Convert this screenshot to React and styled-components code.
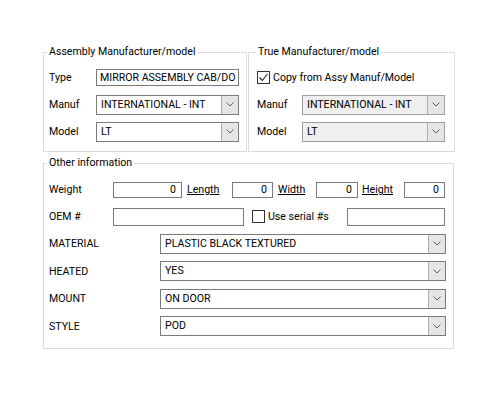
import React from "react";
import styled, { createGlobalStyle } from "styled-components";

const Global = createGlobalStyle`
  html, body { margin: 0; padding: 0; background: #fff; }
  body {
    font-family: Roboto, "Noto Sans", sans-serif;
    font-size: 10.6px;
    color: #000;
  }
  * { box-sizing: border-box; }
`;

const Page = styled.div`
  width: 500px;
  height: 400px;
  padding: 45px 0 0 43px;
  display: flex;
  flex-direction: column;
  gap: 4px;
`;

const TopRow = styled.div`
  display: flex;
  gap: 1px;
`;

const Group = styled.fieldset`
  margin: 0;
  width: ${(p) => p.$w}px;
  min-width: 0;
  border: 1px solid #dcdcdc;
  padding: ${(p) => p.$pad};
`;

const Legend = styled.legend`
  margin-left: ${(p) => p.$ml ?? -2}px;
  padding: 0 2px;
  line-height: 14px;
`;

const Row = styled.div`
  display: flex;
  align-items: center;
  height: ${(p) => p.$h ?? 27}px;
`;

const Label = styled.span`
  width: ${(p) => p.$w}px;
  flex: none;
  white-space: nowrap;
  padding-left: ${(p) => p.$pl ?? 0}px;
`;

const TextBox = styled.div`
  width: ${(p) => p.$w}px;
  height: ${(p) => p.$h}px;
  flex: none;
  border: 1px solid #7a7a7a;
  background: #fff;
  display: flex;
  align-items: center;
  justify-content: ${(p) => (p.$num ? "flex-end" : "flex-start")};
  padding: 0 5px 0 3px;
  overflow: hidden;
  white-space: nowrap;
  line-height: 14px;
`;

const Combo = styled.div`
  width: ${(p) => p.$w}px;
  height: 20px;
  flex: none;
  display: flex;
  border: 1px solid ${(p) => (p.$disabled ? "#a0a0a0" : "#7a7a7a")};
  background: ${(p) => (p.$disabled ? "#efefef" : "#fff")};
`;

const ComboText = styled.div`
  flex: 1;
  display: flex;
  align-items: center;
  padding-left: 4px;
  white-space: nowrap;
  overflow: hidden;
  line-height: 14px;
`;

const ArrowButton = styled.div`
  width: 17px;
  flex: none;
  border-left: 1px solid #adadad;
  background: #e5e5e5;
  display: flex;
  align-items: center;
  justify-content: center;
`;

const CheckWrap = styled.label`
  display: flex;
  align-items: center;
  gap: 3px;
  width: ${(p) => p.$w ?? "auto"};
  margin-left: ${(p) => p.$ml ?? 0}px;
  flex: none;
  white-space: nowrap;
`;

const Box = styled.span`
  width: 13px;
  height: 13px;
  border: 1px solid #333;
  background: #fff;
  display: flex;
  align-items: center;
  justify-content: center;
`;

const Chevron = () => (
  <svg width="8" height="5" viewBox="0 0 8 5">
    <polyline points="0.5,0.5 4,4 7.5,0.5" fill="none" stroke="#606060" strokeWidth="1" />
  </svg>
);

const Tick = () => (
  <svg width="11" height="11" viewBox="0 0 11 11">
    <polyline points="1.5,5.5 4.3,8.5 9.5,2" fill="none" stroke="#222" strokeWidth="1.1" />
  </svg>
);

const Dropdown = ({ w, value, disabled }) => (
  <Combo $w={w} $disabled={disabled}>
    <ComboText>{value}</ComboText>
    <ArrowButton>
      <Chevron />
    </ArrowButton>
  </Combo>
);

const CheckBox = ({ checked, children, ml, w }) => (
  <CheckWrap $ml={ml} $w={w}>
    <Box>{checked && <Tick />}</Box>
    {children}
  </CheckWrap>
);

const attributes = [
  ["MATERIAL", "PLASTIC BLACK TEXTURED"],
  ["HEATED", "YES"],
  ["MOUNT", "ON DOOR"],
  ["STYLE", "POD"],
];

export default function App() {
  return (
    <>
      <Global />
      <Page>
        <TopRow>
          <Group $w={204} $pad="5px 5px 6px 5px">
            <Legend>Assembly Manufacturer/model</Legend>
            <Row>
              <Label $w={47}>Type</Label>
              <TextBox $w={143} $h={17}>MIRROR ASSEMBLY CAB/DO</TextBox>
            </Row>
            <Row>
              <Label $w={47}>Manuf</Label>
              <Dropdown w={143} value="INTERNATIONAL - INT" />
            </Row>
            <Row>
              <Label $w={47}>Model</Label>
              <Dropdown w={143} value="LT" />
            </Row>
          </Group>
          <Group $w={207} $pad="5px 5px 6px 8px">
            <Legend $ml={-1}>True Manufacturer/model</Legend>
            <Row>
              <CheckBox checked>Copy from Assy Manuf/Model</CheckBox>
            </Row>
            <Row>
              <Label $w={45}>Manuf</Label>
              <Dropdown w={143} value="INTERNATIONAL - INT" disabled />
            </Row>
            <Row>
              <Label $w={45}>Model</Label>
              <Dropdown w={143} value="LT" disabled />
            </Row>
          </Group>
        </TopRow>

        <Group $w={411} $pad="6px 5px 8px 5px">
          <Legend>Other information</Legend>
          <Row>
            <Label $w={64}>Weight</Label>
            <TextBox $w={69} $h={16} $num>0</TextBox>
            <Label $w={50} $pl={5}><u>Length</u></Label>
            <TextBox $w={41} $h={16} $num>0</TextBox>
            <Label $w={43} $pl={5}><u>Width</u></Label>
            <TextBox $w={42} $h={16} $num>0</TextBox>
            <Label $w={46} $pl={4}><u>Height</u></Label>
            <TextBox $w={41} $h={16} $num>0</TextBox>
          </Row>
          <Row>
            <Label $w={64}>OEM #</Label>
            <TextBox $w={131} $h={18} />
            <CheckBox ml={8} w="95px">Use serial #s</CheckBox>
            <TextBox $w={98} $h={18} />
          </Row>
          {attributes.map(([name, value]) => (
            <Row key={name} $h={27.5}>
              <Label $w={111}>{name}</Label>
              <Dropdown w={286} value={value} />
            </Row>
          ))}
        </Group>
      </Page>
    </>
  );
}
